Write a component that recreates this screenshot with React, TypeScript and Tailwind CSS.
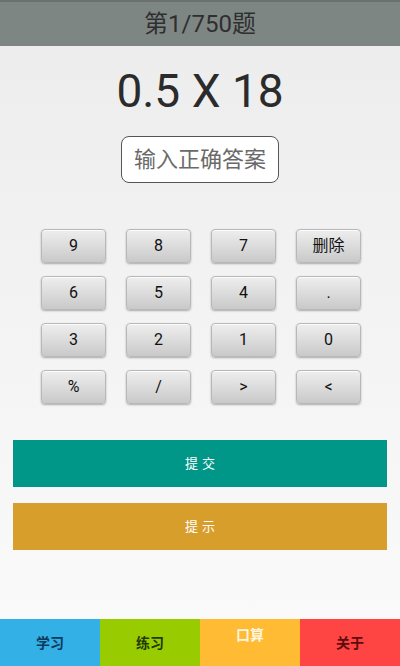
import React from "react";

const keys = ["9", "8", "7", "删除", "6", "5", "4", ".", "3", "2", "1", "0", "%", "/", ">", "<"];

const tabs = [
  { label: "学习", cls: "bg-[#33b1e6] text-[#0d3a5c] pt-[14px]" },
  { label: "练习", cls: "bg-[#99cc00] text-[#1f3a05] pt-[14px]" },
  { label: "口算", cls: "bg-[#ffbb33] text-[#fff6e0] pt-[6px]" },
  { label: "关于", cls: "bg-[#ff4444] text-[#5a0d0d] pt-[14px]" },
];

export default function App() {
  return (
    <div
      className="flex h-[666px] w-[400px] flex-col overflow-hidden bg-gradient-to-b from-[#ececec] to-[#fbfbfb]"
      style={{ fontFamily: "Roboto, 'Noto Sans CJK SC', sans-serif" }}
    >
      {/* header */}
      <div className="flex h-[46px] items-center justify-center border-t-2 border-[#6a716e] bg-[#7e8683] text-[24px] text-[#2f2f2f]">
        第1/750题
      </div>

      {/* question */}
      <div className="mt-[15px] text-center text-[46px] leading-[60px] text-[#2b2b2b]">0.5 X 18</div>

      <div className="mt-[15px] flex justify-center">
        <div className="flex h-[47px] w-[158px] items-center justify-center rounded-[8px] border-[1.5px] border-[#555] bg-white text-[22px] text-[#6a6a6a]">
          输入正确答案
        </div>
      </div>

      {/* keypad */}
      <div className="mx-auto mt-[46px] grid w-[320px] translate-x-[1px] grid-cols-4 gap-x-[20px] gap-y-[13px]">
        {keys.map((k) => (
          <div
            key={k}
            className="flex h-[34px] items-center justify-center rounded-[4px] border border-[#b8b8b8] bg-gradient-to-b from-[#eeeeee] via-[#dcdcdc] to-[#c9c9c9] text-[16px] text-[#111] shadow-[0_1px_2px_rgba(0,0,0,0.3),inset_0_1px_0_rgba(255,255,255,0.8)]"
          >
            {k}
          </div>
        ))}
      </div>

      {/* actions */}
      <div className="mx-[13px] mt-[36px] flex h-[47px] items-center justify-center bg-[#009688] pl-[4px] text-[13px] tracking-[4px] text-white">
        提交
      </div>
      <div className="mx-[13px] mt-[16px] flex h-[47px] items-center justify-center bg-[#d89e2c] pl-[4px] text-[13px] tracking-[4px] text-white">
        提示
      </div>

      {/* tab bar */}
      <div className="mt-auto grid h-[47px] grid-cols-4">
        {tabs.map((t) => (
          <div key={t.label} className={`flex justify-center text-[14px] font-bold ${t.cls}`}>
            {t.label}
          </div>
        ))}
      </div>
    </div>
  );
}
